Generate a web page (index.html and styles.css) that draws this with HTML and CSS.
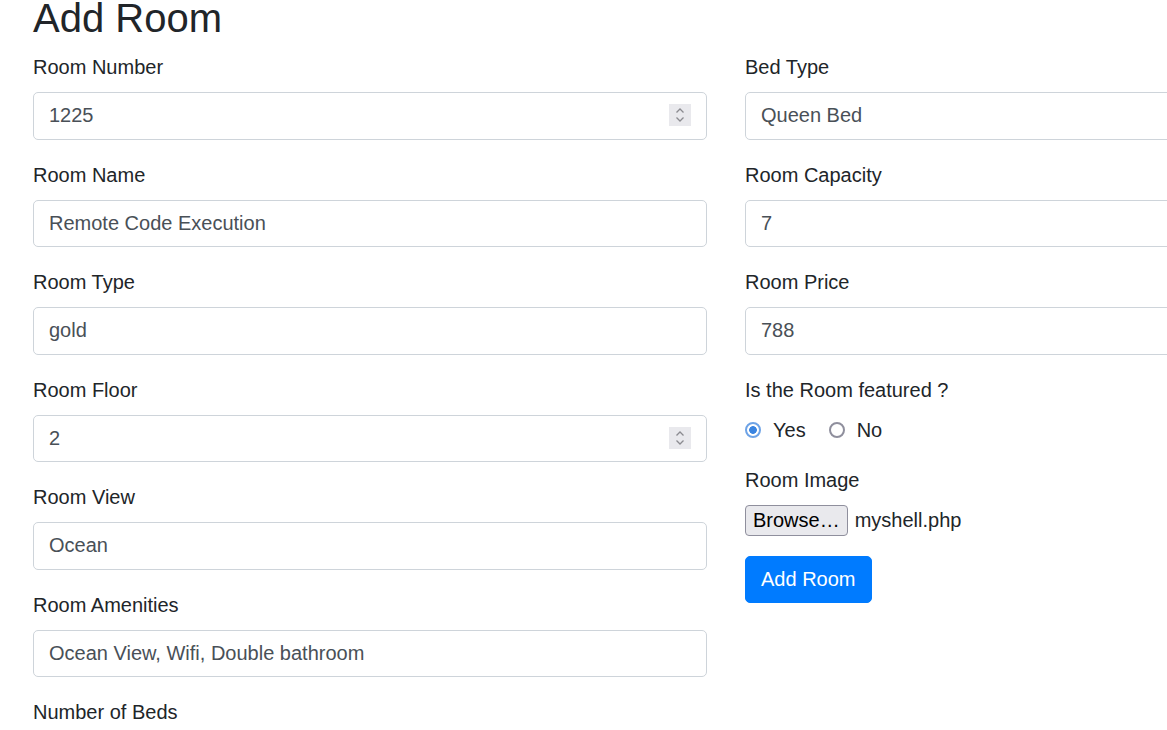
FILE: index.html
```html
<!DOCTYPE html>
<html lang="en">
<head>
<meta charset="utf-8">
<title>Add Room</title>
<link rel="stylesheet" href="styles.css">
</head>
<body>
<div class="page">
  <h2 class="title">Add Room</h2>
  <form class="form-grid">
    <div class="col">
      <div class="group">
        <label class="lbl">Room Number</label>
        <div class="num">
          <input class="field" type="text" value="1225">
          <span class="spin"><svg width="10" height="16" viewBox="0 0 10 16"><path d="M1.5 5.5 L5 2 L8.5 5.5 M1.5 10.5 L5 14 L8.5 10.5" fill="none" stroke="#8b8b90" stroke-width="1.3"/></svg></span>
        </div>
      </div>
      <div class="group">
        <label class="lbl">Room Name</label>
        <input class="field" type="text" value="Remote Code Execution">
      </div>
      <div class="group">
        <label class="lbl">Room Type</label>
        <input class="field" type="text" value="gold">
      </div>
      <div class="group">
        <label class="lbl">Room Floor</label>
        <div class="num">
          <input class="field" type="text" value="2">
          <span class="spin"><svg width="10" height="16" viewBox="0 0 10 16"><path d="M1.5 5.5 L5 2 L8.5 5.5 M1.5 10.5 L5 14 L8.5 10.5" fill="none" stroke="#8b8b90" stroke-width="1.3"/></svg></span>
        </div>
      </div>
      <div class="group">
        <label class="lbl">Room View</label>
        <input class="field" type="text" value="Ocean">
      </div>
      <div class="group">
        <label class="lbl">Room Amenities</label>
        <input class="field" type="text" value="Ocean View, Wifi, Double bathroom">
      </div>
      <div class="group">
        <label class="lbl">Number of Beds</label>
        <input class="field" type="text" value="1">
      </div>
    </div>
    <div class="col">
      <div class="group">
        <label class="lbl">Bed Type</label>
        <input class="field" type="text" value="Queen Bed">
      </div>
      <div class="group">
        <label class="lbl">Room Capacity</label>
        <input class="field" type="text" value="7">
      </div>
      <div class="group">
        <label class="lbl">Room Price</label>
        <input class="field" type="text" value="788">
      </div>
      <div class="group">
        <label class="lbl">Is the Room featured ?</label>
        <div class="radios">
          <label class="check"><input class="radio" type="radio" name="featured" checked> Yes</label>
          <label class="check"><input class="radio" type="radio" name="featured"> No</label>
        </div>
      </div>
      <div class="group">
        <label class="lbl">Room Image</label>
        <div class="file">
          <button type="button" class="browse">Browse…</button>
          <span class="fname">myshell.php</span>
        </div>
      </div>
      <button type="button" class="btn">Add Room</button>
    </div>
  </form>
</div>
</body>
</html>
```
FILE: styles.css
```css
html {
  overflow: hidden;
}
body {
  margin: 0;
  background: #ffffff;
  font-family: "Liberation Sans", Arial, sans-serif;
  font-size: 20px;
  line-height: 30px;
  color: #212529;
}
.page {
  padding-left: 33px;
}
.title {
  margin: 0 0 16px 0;
  font-size: 40px;
  line-height: 36px;
  font-weight: 400;
  color: #212529;
}
.form-grid {
  display: flex;
  gap: 38px;
  align-items: flex-start;
}
.col {
  width: 674px;
  flex-shrink: 0;
  display: flex;
  flex-direction: column;
  align-items: flex-start;
}
.group {
  width: 100%;
  margin-bottom: 20px;
}
.lbl {
  display: block;
  margin-bottom: 10px;
  line-height: 30px;
}
.field {
  display: block;
  box-sizing: border-box;
  width: 100%;
  height: 47.5px;
  padding: 7.5px 15px;
  margin: 0;
  font-family: "Liberation Sans", Arial, sans-serif;
  font-size: 20px;
  line-height: 30px;
  color: #495057;
  background: #ffffff;
  border: 1px solid #ced4da;
  border-radius: 5px;
  outline: none;
}
.num {
  position: relative;
}
.spin {
  position: absolute;
  right: 16px;
  top: 12px;
  width: 22px;
  height: 22px;
  background: #e9e9ed;
  display: flex;
  align-items: center;
  justify-content: center;
}
.radios {
  display: flex;
  align-items: center;
  height: 30px;
}
.check {
  display: inline-flex;
  align-items: center;
  margin-right: 23px;
  line-height: 30px;
}
.radio {
  appearance: none;
  -webkit-appearance: none;
  box-sizing: border-box;
  width: 16px;
  height: 16px;
  margin: 0 12px 0 0;
  border: 2px solid #8f8f9d;
  border-radius: 50%;
  background: #ffffff;
}
.radio:checked {
  border-color: #6ea3e6;
  background: radial-gradient(circle, #3a84e0 0, #3a84e0 3.5px, #ffffff 4.2px);
}
.file {
  display: flex;
  align-items: center;
  height: 31px;
}
.browse {
  box-sizing: border-box;
  height: 31px;
  padding: 0 7px;
  margin: 0 7px 0 0;
  font-family: "Liberation Sans", Arial, sans-serif;
  font-size: 20px;
  line-height: 29px;
  color: #000000;
  background: #e9e9ed;
  border: 1px solid #8f8f9d;
  border-radius: 4px;
}
.fname {
  color: #212529;
}
.btn {
  box-sizing: border-box;
  height: 47.5px;
  padding: 7.5px 15px;
  font-family: "Liberation Sans", Arial, sans-serif;
  font-size: 20px;
  line-height: 30px;
  color: #ffffff;
  background: #007bff;
  border: 1.25px solid #007bff;
  border-radius: 5px;
}
```
